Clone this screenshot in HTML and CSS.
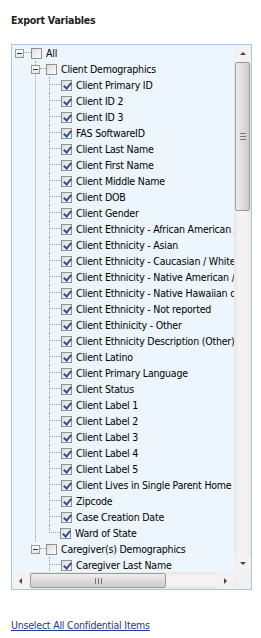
FILE: index.html
```html
<!DOCTYPE html>
<html>
<head>
    <title>Export Variables</title>
    <link rel="stylesheet" href="styles.css">
</head>
<body>
    <h4 class="title">Export Variables</h4>

    <div class="tree">
        <div class="tree-main">
            <div class="tree-view">
                <ul class="root">
                    <li>
                        <div class="row">
                            <span class="exp"></span><span class="stub-short"></span><span class="cb"></span><span class="label">All</span>
                        </div>
                        <ul class="kids">
                            <li class="branch">
                                <div class="row">
                                    <span class="exp exp-in"></span><span class="stub-short"></span><span class="cb"></span><span class="label">Client Demographics</span>
                                </div>
                                <ul class="leaves">
                                    <li><div class="row"><span class="stub"></span><span class="cb on"></span><span class="label">Client Primary ID</span></div></li>
                                    <li><div class="row"><span class="stub"></span><span class="cb on"></span><span class="label">Client ID 2</span></div></li>
                                    <li><div class="row"><span class="stub"></span><span class="cb on"></span><span class="label">Client ID 3</span></div></li>
                                    <li><div class="row"><span class="stub"></span><span class="cb on"></span><span class="label">FAS SoftwareID</span></div></li>
                                    <li><div class="row"><span class="stub"></span><span class="cb on"></span><span class="label">Client Last Name</span></div></li>
                                    <li><div class="row"><span class="stub"></span><span class="cb on"></span><span class="label">Client First Name</span></div></li>
                                    <li><div class="row"><span class="stub"></span><span class="cb on"></span><span class="label">Client Middle Name</span></div></li>
                                    <li><div class="row"><span class="stub"></span><span class="cb on"></span><span class="label">Client DOB</span></div></li>
                                    <li><div class="row"><span class="stub"></span><span class="cb on"></span><span class="label">Client Gender</span></div></li>
                                    <li><div class="row"><span class="stub"></span><span class="cb on"></span><span class="label">Client Ethnicity - African American / Black</span></div></li>
                                    <li><div class="row"><span class="stub"></span><span class="cb on"></span><span class="label">Client Ethnicity - Asian</span></div></li>
                                    <li><div class="row"><span class="stub"></span><span class="cb on"></span><span class="label">Client Ethnicity - Caucasian / White</span></div></li>
                                    <li><div class="row"><span class="stub"></span><span class="cb on"></span><span class="label">Client Ethnicity - Native American / Alaskan</span></div></li>
                                    <li><div class="row"><span class="stub"></span><span class="cb on"></span><span class="label">Client Ethnicity - Native Hawaiian or Pacific Islander</span></div></li>
                                    <li><div class="row"><span class="stub"></span><span class="cb on"></span><span class="label">Client Ethnicity - Not reported</span></div></li>
                                    <li><div class="row"><span class="stub"></span><span class="cb on"></span><span class="label">Client Ethinicity - Other</span></div></li>
                                    <li><div class="row"><span class="stub"></span><span class="cb on"></span><span class="label">Client Ethnicity Description (Other)</span></div></li>
                                    <li><div class="row"><span class="stub"></span><span class="cb on"></span><span class="label">Client Latino</span></div></li>
                                    <li><div class="row"><span class="stub"></span><span class="cb on"></span><span class="label">Client Primary Language</span></div></li>
                                    <li><div class="row"><span class="stub"></span><span class="cb on"></span><span class="label">Client Status</span></div></li>
                                    <li><div class="row"><span class="stub"></span><span class="cb on"></span><span class="label">Client Label 1</span></div></li>
                                    <li><div class="row"><span class="stub"></span><span class="cb on"></span><span class="label">Client Label 2</span></div></li>
                                    <li><div class="row"><span class="stub"></span><span class="cb on"></span><span class="label">Client Label 3</span></div></li>
                                    <li><div class="row"><span class="stub"></span><span class="cb on"></span><span class="label">Client Label 4</span></div></li>
                                    <li><div class="row"><span class="stub"></span><span class="cb on"></span><span class="label">Client Label 5</span></div></li>
                                    <li><div class="row"><span class="stub"></span><span class="cb on"></span><span class="label">Client Lives in Single Parent Home</span></div></li>
                                    <li><div class="row"><span class="stub"></span><span class="cb on"></span><span class="label">Zipcode</span></div></li>
                                    <li><div class="row"><span class="stub"></span><span class="cb on"></span><span class="label">Case Creation Date</span></div></li>
                                    <li class="last"><div class="row"><span class="stub"></span><span class="cb on"></span><span class="label">Ward of State</span></div></li>
                                </ul>
                            </li>
                            <li class="branch branch-last">
                                <div class="row">
                                    <span class="exp exp-in"></span><span class="stub-short"></span><span class="cb"></span><span class="label">Caregiver(s) Demographics</span>
                                </div>
                                <ul class="leaves">
                                    <li><div class="row"><span class="stub"></span><span class="cb on"></span><span class="label">Caregiver Last Name</span></div></li>
                                    <li><div class="row"><span class="stub"></span><span class="cb on"></span><span class="label">Caregiver First Name</span></div></li>
                                </ul>
                            </li>
                        </ul>
                    </li>
                </ul>
            </div>
            <div class="vscroll">
                <div class="sb-btn"><span class="arr arr-up"></span></div>
                <div class="vtrack">
                    <div class="vthumb"><span class="grip-v"></span></div>
                </div>
                <div class="sb-btn"><span class="arr arr-down"></span></div>
            </div>
        </div>
        <div class="hscroll">
            <div class="sb-btn"><span class="arr arr-left"></span></div>
            <div class="htrack">
                <div class="hthumb"><span class="grip-h"></span></div>
            </div>
            <div class="sb-btn"><span class="arr arr-right"></span></div>
            <div class="corner"></div>
        </div>
    </div>

    <a class="link" href="#">Unselect All Confidential Items</a>
</body>
</html>
```

FILE: styles.css
```css
body {
    margin: 0;
    padding: 13px 9px 0 11px;
    background: white;
    font-family: "DejaVu Sans Condensed", "DejaVu Sans", sans-serif;
    font-size: 10.5px;
    letter-spacing: -0.2px;
    color: #000;
}
.title {
    margin: 0;
    font-size: 10.5px;
    line-height: 14px;
    font-weight: bold;
    color: #222;
}
.tree {
    margin-top: 17px;
    width: 239px;
    border: 1px solid #a9c7e6;
    background: #eef6fd;
}
.tree-main {
    display: flex;
    height: 527px;
}
.tree-view {
    flex: 1;
    overflow: hidden;
}
ul {
    list-style: none;
    margin: 0;
    padding: 0;
}
.row {
    display: flex;
    align-items: flex-start;
    height: 16px;
    white-space: nowrap;
}
.label {
    line-height: 16px;
}
.exp {
    flex: none;
    box-sizing: border-box;
    width: 9px;
    height: 9px;
    margin-top: 4px;
    margin-left: 3px;
    border: 1px solid #9a9a9a;
    background: linear-gradient(#ffffff, #e4e4e4);
    position: relative;
}
.exp::after {
    content: "";
    position: absolute;
    left: 1px;
    top: 3px;
    width: 5px;
    height: 1px;
    background: #333;
}
.exp-in {
    margin-left: -5px;
}
.stub-short {
    flex: none;
    width: 7px;
    height: 7px;
    border-bottom: 1px dotted #a0a0a0;
}
.kids .stub-short {
    width: 6px;
}
.stub {
    flex: none;
    width: 11px;
    height: 7px;
    border-bottom: 1px dotted #a0a0a0;
}
.cb {
    flex: none;
    box-sizing: border-box;
    width: 11px;
    height: 11px;
    margin-top: 3px;
    margin-right: 4px;
    border: 1px solid #8e8f8f;
    background: linear-gradient(135deg, #dcdcdc, #fefefe);
    position: relative;
}
.cb.on::after {
    content: "";
    position: absolute;
    left: 3px;
    top: 0;
    width: 3px;
    height: 6px;
    border-right: 2px solid #2d4fa0;
    border-bottom: 2px solid #2d4fa0;
    transform: rotate(40deg);
}
.kids {
    margin-left: 23px;
}
.branch {
    border-left: 1px dotted #a0a0a0;
}
.branch-last {
    border-left-color: transparent;
}
.leaves {
    margin-left: 13px;
}
.leaves li {
    border-left: 1px dotted #a0a0a0;
}
.leaves li.last {
    border-left: none;
}
.leaves li.last .stub {
    border-left: 1px dotted #a0a0a0;
    width: 10px;
}
.vscroll {
    flex: none;
    width: 17px;
    display: flex;
    flex-direction: column;
    background: #f0f0f0;
}
.sb-btn {
    flex: none;
    width: 17px;
    height: 17px;
    display: flex;
    align-items: center;
    justify-content: center;
    background: #f2f2f2;
}
.vtrack {
    flex: 1;
    background: linear-gradient(90deg, #e7e7e7, #f4f4f4 30%, #f4f4f4 70%, #e7e7e7);
}
.vthumb {
    box-sizing: border-box;
    height: 149px;
    margin: 0 1px;
    border: 1px solid #9b9b9b;
    border-radius: 2px;
    background: linear-gradient(90deg, #eeeeee, #dcdcdc 50%, #cdcdcd);
    display: flex;
    justify-content: center;
    align-items: center;
}
.grip-v {
    width: 6px;
    height: 5px;
    border-top: 1px solid #777;
    border-bottom: 1px solid #777;
    background: linear-gradient(transparent 2px, #777 2px, #777 3px, transparent 3px);
}
.hscroll {
    display: flex;
    height: 17px;
    background: #f0f0f0;
}
.htrack {
    flex: 1;
    padding-left: 1px;
    background: linear-gradient(#e7e7e7, #f4f4f4 30%, #f4f4f4 70%, #e7e7e7);
}
.hthumb {
    box-sizing: border-box;
    width: 136px;
    height: 15px;
    margin-top: 1px;
    border: 1px solid #9b9b9b;
    border-radius: 2px;
    background: linear-gradient(#eeeeee, #dcdcdc 50%, #cdcdcd);
    display: flex;
    justify-content: center;
    align-items: center;
}
.grip-h {
    width: 5px;
    height: 6px;
    border-left: 1px solid #777;
    border-right: 1px solid #777;
    background: linear-gradient(90deg, transparent 2px, #777 2px, #777 3px, transparent 3px);
}
.corner {
    width: 17px;
    background: #f0f0f0;
}
.arr {
    width: 0;
    height: 0;
    border: 3px solid transparent;
}
.arr-up {
    border-bottom: 3px solid #444;
    border-top-width: 0;
}
.arr-down {
    border-top: 3px solid #444;
    border-bottom-width: 0;
}
.arr-left {
    border-right: 3px solid #444;
    border-left-width: 0;
}
.arr-right {
    border-left: 3px solid #444;
    border-right-width: 0;
}
.link {
    display: inline-block;
    margin-top: 28px;
    color: #20399a;
    line-height: 14px;
}
```
